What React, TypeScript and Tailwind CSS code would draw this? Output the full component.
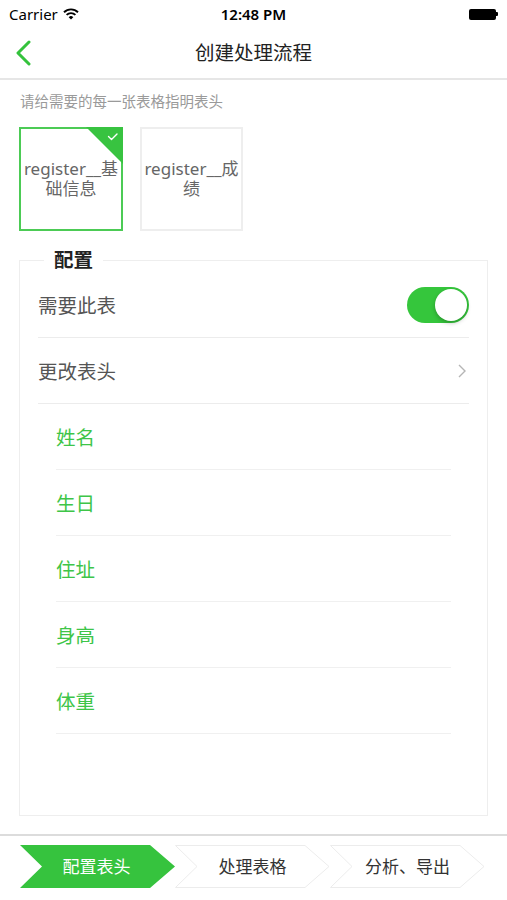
import React from "react";

const font = { fontFamily: '"Noto Sans", "Noto Sans CJK SC", sans-serif' };

function StatusBar() {
  return (
    <div className="relative flex h-[28px] items-center justify-between px-[9px]">
      <div className="flex items-center gap-[5px] text-[15px] text-black">
        <span>Carrier</span>
        <svg width="16" height="12" viewBox="0 0 16 12">
          <path d="M1 4.2 A10 10 0 0 1 15 4.2" fill="none" stroke="#000" strokeWidth="1.9" />
          <path d="M3.6 6.9 A6.3 6.3 0 0 1 12.4 6.9" fill="none" stroke="#000" strokeWidth="1.9" />
          <path d="M8 11.5 L5.7 9.2 A3.3 3.3 0 0 1 10.3 9.2 Z" fill="#000" />
        </svg>
      </div>
      <div className="absolute left-1/2 -translate-x-1/2 text-[15px] font-semibold text-black">12:48 PM</div>
      <div className="flex items-center">
        <div className="h-[11px] w-[27px] rounded-[2px] bg-black" />
        <div className="h-[4px] w-[2px] rounded-r-[1px] bg-black" />
      </div>
    </div>
  );
}

function NavBar() {
  return (
    <div className="relative flex h-[52px] items-center justify-center border-b-2 border-[#e6e6e6]">
      <svg className="absolute left-[14px] top-[12px]" width="18" height="26" viewBox="0 0 18 26">
        <path d="M15 2 L4 13 L15 24" fill="none" stroke="#34c23c" strokeWidth="3" strokeLinecap="round" strokeLinejoin="round" />
      </svg>
      <span className="text-[19.5px] text-[#222]">创建处理流程</span>
    </div>
  );
}

function TableCard({ label, selected }: { label: string; selected?: boolean }) {
  return (
    <div
      className={
        selected
          ? "relative flex h-[104px] w-[104px] items-center justify-center border-2 border-[#4ccb55] px-[2px]"
          : "relative flex h-[104px] w-[103px] items-center justify-center border-2 border-[#eeeeee] px-[2px]"
      }
    >
      {selected && (
        <svg className="absolute right-[-2px] top-[-2px]" width="37" height="37" viewBox="0 0 37 37">
          <path d="M0 0 L37 0 L37 37 Z" fill="#38c340" />
          <path d="M22.5 9.5 L25.5 12.5 L31 7" fill="none" stroke="#fff" strokeWidth="1.4" strokeLinecap="round" strokeLinejoin="round" />
        </svg>
      )}
      <p className="break-all text-center text-[17px] leading-[20px] text-[#666]">{label}</p>
    </div>
  );
}

function Toggle() {
  return (
    <div className="flex h-[36px] w-[62px] items-center justify-end rounded-full bg-[#35c63c] p-[2px]">
      <div className="h-[32px] w-[32px] rounded-full bg-white shadow-[0_2px_4px_rgba(0,0,0,0.25)]" />
    </div>
  );
}

const fields = ["姓名", "生日", "住址", "身高", "体重"];

const steps = [
  { label: "配置表头", active: true },
  { label: "处理表格" },
  { label: "分析、导出" },
];

function Step({ label, active }: { label: string; active?: boolean }) {
  return (
    <div className="relative flex h-[43px] w-[155px] items-center justify-center">
      <svg className="absolute inset-0" width="155" height="43" viewBox="0 0 155 43">
        {active ? (
          <path d="M0 0 L130 0 L155 21.5 L130 43 L0 43 L22 21.5 Z" fill="#36c33e" />
        ) : (
          <path d="M0.5 0.5 L130 0.5 L154 21.5 L130 42.5 L0.5 42.5 L22 21.5 Z" fill="#fff" stroke="#ececec" strokeWidth="1" />
        )}
      </svg>
      <span className={active ? "relative pr-[2px] text-[17px] text-white" : "relative text-[17px] text-[#333]"}>
        {label}
      </span>
    </div>
  );
}

export default function App() {
  return (
    <div className="flex h-[900px] w-[507px] flex-col bg-white" style={font}>
      <StatusBar />
      <NavBar />

      <p className="mt-[12px] px-[20px] text-[14.5px] leading-[18px] text-[#9a9a9a]">请给需要的每一张表格指明表头</p>

      <div className="mt-[17px] flex gap-[17px] px-[19px]">
        <TableCard label="register__基础信息" selected />
        <TableCard label="register__成绩" />
      </div>

      <div className="relative mx-[19px] mt-[29px] h-[556px] border border-[#eeeeee] px-[18px] pt-[11px]">
        <div className="absolute left-[24px] top-[-14px] bg-white px-[10px] text-[19.5px] font-bold leading-[26px] text-[#222]">
          配置
        </div>
        <div className="flex h-[66px] items-center justify-between border-b border-[#ececec]">
          <span className="pt-[2px] text-[19.5px] text-[#555]">需要此表</span>
          <Toggle />
        </div>
        <div className="flex h-[66px] items-center justify-between border-b border-[#ececec]">
          <span className="pt-[2px] text-[19.5px] text-[#555]">更改表头</span>
          <svg width="10" height="16" viewBox="0 0 10 16" className="mr-[2px]">
            <path d="M2 2 L8 8 L2 14" fill="none" stroke="#b5b5b5" strokeWidth="1.4" />
          </svg>
        </div>
        <div className="px-[18px]">
          {fields.map((f) => (
            <div key={f} className="flex h-[66px] items-center border-b border-[#f0f0f0]">
              <span className="pt-[2px] text-[19.5px] text-[#3ec548]">{f}</span>
            </div>
          ))}
        </div>
      </div>

      <div className="mt-[18px] border-t-2 border-[#dcdcdc]" />
      <div className="mt-[9px] flex px-[20px]">
        {steps.map((s) => (
          <Step key={s.label} label={s.label} active={s.active} />
        ))}
      </div>
    </div>
  );
}
